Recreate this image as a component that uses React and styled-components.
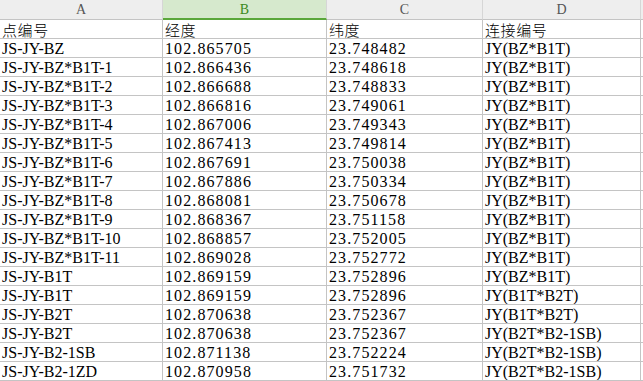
import React from "react";
import styled, { createGlobalStyle } from "styled-components";

const GlobalStyle = createGlobalStyle`
  html, body {
    margin: 0;
    padding: 0;
    background: #ffffff;
  }
`;

const Sheet = styled.div`
  display: grid;
  grid-template-columns: 163px 164px 156px 158px 2px;
  width: 643px;
  overflow: hidden;
`;

const ColHeader = styled.div`
  height: 20px;
  box-sizing: border-box;
  border-right: 1px solid #d6d6d6;
  border-bottom: ${(p) => (p.$active ? "2px solid #5aa73a" : "1px solid #c4c4c4")};
  background: ${(p) => (p.$active ? "#d6e9cd" : "#eeeeee")};
  color: ${(p) => (p.$active ? "#3a8a1c" : "#555555")};
  font-family: "Liberation Serif", "DejaVu Serif", serif;
  font-size: 14px;
  line-height: 19px;
  text-align: center;
`;

const Cell = styled.div`
  height: 19px;
  box-sizing: border-box;
  border-right: 1px solid #c4c4c4;
  border-bottom: 1px solid #c4c4c4;
  padding-left: 2px;
  font-family: ${(p) =>
    p.$cjk
      ? '"Noto Sans CJK SC", sans-serif'
      : '"Liberation Serif", "DejaVu Serif", serif'};
  font-size: ${(p) => (p.$cjk ? "15px" : "16px")};
  font-weight: ${(p) => (p.$cjk ? 300 : 400)};
  letter-spacing: ${(p) => (p.$cjk ? "0.6px" : p.$num ? "1.1px" : "0")};
  line-height: 19px;
  color: #000000;
  white-space: nowrap;
  overflow: hidden;
`;

const Edge = styled.div`
  height: ${(p) => (p.$head ? "20px" : "19px")};
  box-sizing: border-box;
  background: ${(p) => (p.$head ? "#eeeeee" : "#ffffff")};
  border-bottom: 1px solid #c4c4c4;
`;

const columns = ["A", "B", "C", "D"];
const titles = ["点编号", "经度", "纬度", "连接编号"];
const numericCols = [false, true, true, false];

const rows = [
  ["JS-JY-BZ", "102.865705", "23.748482", "JY(BZ*B1T)"],
  ["JS-JY-BZ*B1T-1", "102.866436", "23.748618", "JY(BZ*B1T)"],
  ["JS-JY-BZ*B1T-2", "102.866688", "23.748833", "JY(BZ*B1T)"],
  ["JS-JY-BZ*B1T-3", "102.866816", "23.749061", "JY(BZ*B1T)"],
  ["JS-JY-BZ*B1T-4", "102.867006", "23.749343", "JY(BZ*B1T)"],
  ["JS-JY-BZ*B1T-5", "102.867413", "23.749814", "JY(BZ*B1T)"],
  ["JS-JY-BZ*B1T-6", "102.867691", "23.750038", "JY(BZ*B1T)"],
  ["JS-JY-BZ*B1T-7", "102.867886", "23.750334", "JY(BZ*B1T)"],
  ["JS-JY-BZ*B1T-8", "102.868081", "23.750678", "JY(BZ*B1T)"],
  ["JS-JY-BZ*B1T-9", "102.868367", "23.751158", "JY(BZ*B1T)"],
  ["JS-JY-BZ*B1T-10", "102.868857", "23.752005", "JY(BZ*B1T)"],
  ["JS-JY-BZ*B1T-11", "102.869028", "23.752772", "JY(BZ*B1T)"],
  ["JS-JY-B1T", "102.869159", "23.752896", "JY(BZ*B1T)"],
  ["JS-JY-B1T", "102.869159", "23.752896", "JY(B1T*B2T)"],
  ["JS-JY-B2T", "102.870638", "23.752367", "JY(B1T*B2T)"],
  ["JS-JY-B2T", "102.870638", "23.752367", "JY(B2T*B2-1SB)"],
  ["JS-JY-B2-1SB", "102.871138", "23.752224", "JY(B2T*B2-1SB)"],
  ["JS-JY-B2-1ZD", "102.870958", "23.751732", "JY(B2T*B2-1SB)"],
];

export default function App() {
  return (
    <>
      <GlobalStyle />
      <Sheet>
        {columns.map((c) => (
          <ColHeader key={c} $active={c === "B"}>
            {c}
          </ColHeader>
        ))}
        <Edge $head />
        {titles.map((t) => (
          <Cell key={t} $cjk>
            {t}
          </Cell>
        ))}
        <Edge />
        {rows.map((r, i) => (
          <React.Fragment key={i}>
            {r.map((v, j) => (
              <Cell key={j} $num={numericCols[j]}>
                {v}
              </Cell>
            ))}
            <Edge />
          </React.Fragment>
        ))}
      </Sheet>
    </>
  );
}
